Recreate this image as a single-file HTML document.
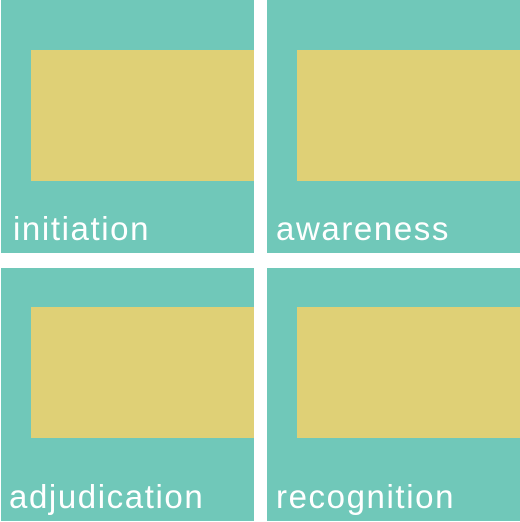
<!DOCTYPE html>
<html><head><style>
body{margin:0;width:520px;height:522px;background:#fff;position:relative;overflow:hidden;font-family:"Liberation Sans",sans-serif}
.t{position:absolute;background:#70c8b9;width:253px;height:253px}
.y{position:absolute;background:#dfd076;width:223px;height:131px;left:30px;top:50px}
.l{position:absolute;color:#fff;font-size:33px;font-weight:300;left:12px;top:210px;letter-spacing:1.6px;line-height:38px}
</style></head><body>
<div class="t" style="left:1px;top:0"><div class="y"></div><div class="l">initiation</div></div>
<div class="t" style="left:267px;top:0"><div class="y"></div><div class="l" style="left:9px">awareness</div></div>
<div class="t" style="left:1px;top:268px"><div class="y" style="top:39px"></div><div class="l" style="left:8px;top:210px">adjudication</div></div>
<div class="t" style="left:267px;top:268px"><div class="y" style="top:39px"></div><div class="l" style="left:9px;top:210px">recognition</div></div>
</body></html>
